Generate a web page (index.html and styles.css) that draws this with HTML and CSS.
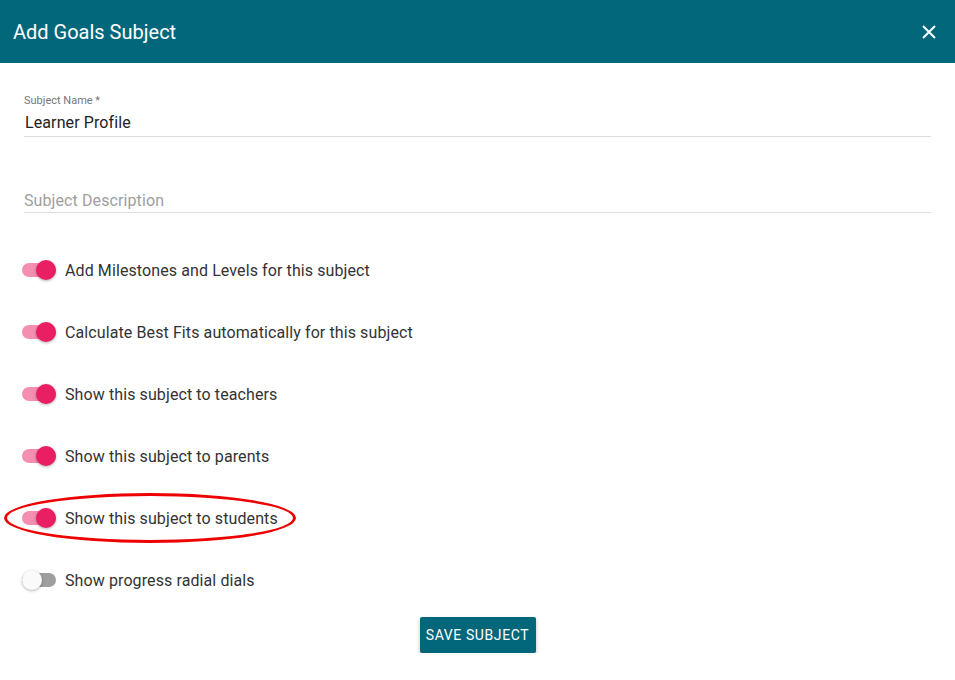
FILE: index.html
```html
<!DOCTYPE html>
<html lang="en">
<head>
    <meta charset="UTF-8">
    <title>Add Goals Subject</title>
    <link rel="stylesheet" href="styles.css">
</head>
<body>
    <div class="dialog">
        <div class="header">
            <h1>Add Goals Subject</h1>
            <svg class="close" width="16" height="16" viewBox="0 0 16 16">
                <path d="M2 2 L14 14 M14 2 L2 14" stroke="#fff" stroke-width="2" />
            </svg>
        </div>

        <div class="content">
            <div class="field">
                <label>Subject Name *</label>
                <div class="value">Learner Profile</div>
            </div>
            <div class="field empty">
                <div class="placeholder">Subject Description</div>
            </div>

            <div class="toggles">
                <div class="toggle-row"><span class="switch on"></span>Add Milestones and Levels for this subject</div>
                <div class="toggle-row"><span class="switch on"></span>Calculate Best Fits automatically for this subject</div>
                <div class="toggle-row"><span class="switch on"></span>Show this subject to teachers</div>
                <div class="toggle-row"><span class="switch on"></span>Show this subject to parents</div>
                <div class="toggle-row marked"><span class="switch on"></span>Show this subject to students<span class="ring"></span></div>
                <div class="toggle-row"><span class="switch"></span>Show progress radial dials</div>
            </div>

            <div class="actions">
                <button>Save Subject</button>
            </div>
        </div>
    </div>
</body>
</html>
```

FILE: styles.css
```css
body {
    margin: 0;
    font-family: Roboto, "Noto Sans", sans-serif;
    color: #222;
    background: #fff;
}

.header {
    height: 63px;
    background-color: #03677b;
    display: flex;
    align-items: center;
    justify-content: space-between;
    padding: 0 18px 0 13px;
}
.header h1 {
    margin: 0;
    font-size: 20px;
    font-weight: 400;
    color: #fff;
}
.close {
    width: 16px;
    height: 16px;
}

.content {
    padding: 31px 24px 0 24px;
}

.field {
    border-bottom: 1px solid #ddd;
    padding-bottom: 3px;
    margin-bottom: 52px;
}
.field label {
    display: block;
    font-size: 11px;
    color: #777;
    line-height: 14px;
    margin-bottom: 5px;
}
.field .value {
    font-size: 16px;
    line-height: 20px;
    padding-left: 1px;
    letter-spacing: 0.1px;
}
.field.empty {
    margin-bottom: 45px;
    padding-top: 2px;
    padding-bottom: 1px;
}
.placeholder {
    font-size: 16px;
    color: #9e9e9e;
    line-height: 20px;
    letter-spacing: 0.1px;
}

.toggles {
    display: flex;
    flex-direction: column;
}
.toggle-row {
    position: relative;
    display: flex;
    align-items: center;
    height: 24px;
    margin-bottom: 38px;
    font-size: 16px;
    color: #333;
    letter-spacing: 0.1px;
}
.switch {
    position: relative;
    width: 34px;
    height: 14px;
    border-radius: 7px;
    background: #f48fb1;
    margin: 0 9px 0 -2px;
}
.switch::after {
    content: "";
    position: absolute;
    top: -3px;
    left: 14px;
    width: 20px;
    height: 20px;
    border-radius: 50%;
    background: #e91e63;
    box-shadow: 0 1px 3px rgba(0, 0, 0, 0.3);
}
.switch:not(.on) {
    background: #9e9e9e;
}
.switch:not(.on)::after {
    left: 0;
    background: #fafafa;
}

.ring {
    position: absolute;
    left: -20px;
    top: -13px;
    width: 286px;
    height: 44px;
    border: 3px solid #e00;
    border-radius: 50%;
}

.actions {
    display: flex;
    justify-content: center;
    margin-top: -13px;
}
button {
    background: #03677b;
    color: #fff;
    border: none;
    border-radius: 2px;
    height: 36px;
    padding: 0;
    width: 116px;
    font-family: Roboto, sans-serif;
    font-size: 14px;
    font-weight: 400;
    letter-spacing: 0.6px;
    text-transform: uppercase;
    box-shadow: 0 2px 4px rgba(0, 0, 0, 0.25);
}
```
